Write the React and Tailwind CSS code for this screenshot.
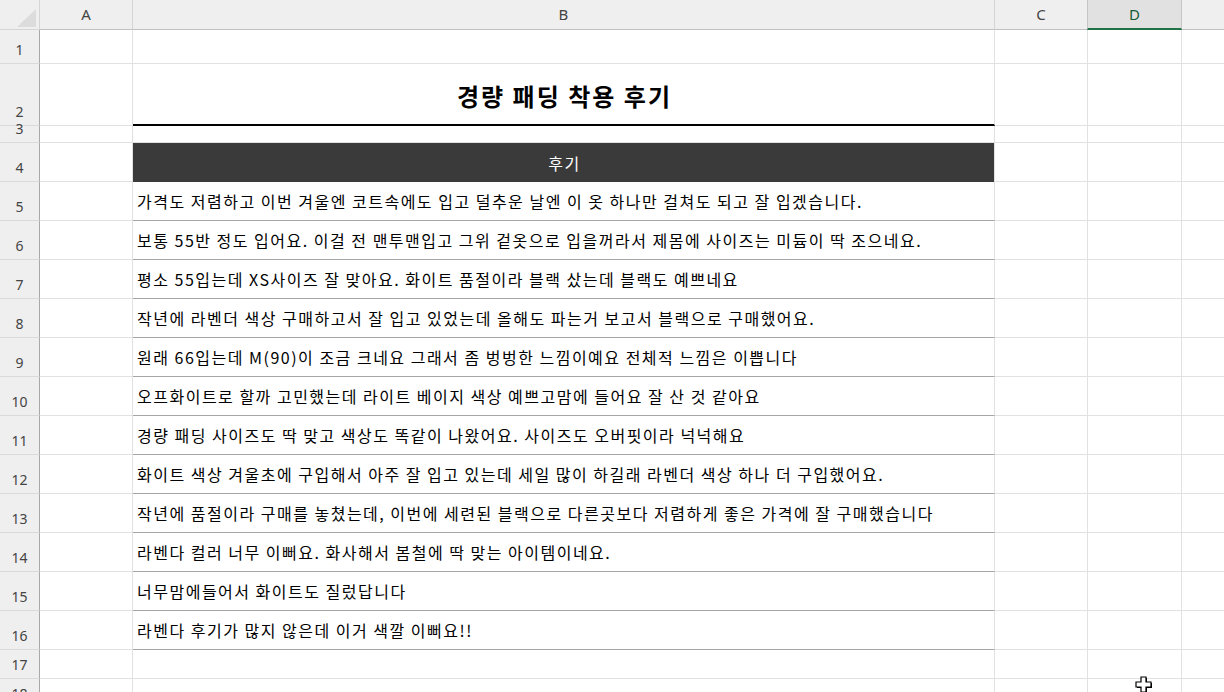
import React from 'react';

const reviews = [
  '가격도 저렴하고 이번 겨울엔 코트속에도 입고 덜추운 날엔 이 옷 하나만 걸쳐도 되고 잘 입겠습니다.',
  '보통 55반 정도 입어요. 이걸 전 맨투맨입고 그위 겉옷으로 입을꺼라서 제몸에 사이즈는 미듐이 딱 조으네요.',
  '평소 55입는데 XS사이즈 잘 맞아요. 화이트 품절이라 블랙 샀는데 블랙도 예쁘네요',
  '작년에 라벤더 색상 구매하고서 잘 입고 있었는데 올해도 파는거 보고서 블랙으로 구매했어요.',
  '원래 66입는데 M(90)이 조금 크네요 그래서 좀 벙벙한 느낌이예요 전체적 느낌은 이쁩니다',
  '오프화이트로 할까 고민했는데 라이트 베이지 색상 예쁘고맘에 들어요 잘 산 것 같아요',
  '경량 패딩 사이즈도 딱 맞고 색상도 똑같이 나왔어요. 사이즈도 오버핏이라 넉넉해요',
  '화이트 색상 겨울초에 구입해서 아주 잘 입고 있는데 세일 많이 하길래 라벤더 색상 하나 더 구입했어요.',
  '작년에 품절이라 구매를 놓쳤는데, 이번에 세련된 블랙으로 다른곳보다 저렴하게 좋은 가격에 잘 구매했습니다',
  '라벤다 컬러 너무 이뻐요. 화사해서 봄철에 딱 맞는 아이템이네요.',
  '너무맘에들어서 화이트도 질렀답니다',
  '라벤다 후기가 많지 않은데 이거 색깔 이뻐요!!',
];

const kr = { fontFamily: '"Noto Sans CJK KR", "Noto Sans", sans-serif' };
const ui = { fontFamily: '"Noto Sans", "Liberation Sans", sans-serif' };

// one spreadsheet row: row number + A..E cells
const Row = ({ n, h, b, bClass }) => (
  <div className={`flex shrink-0 ${h}`}>
    <div
      style={ui}
      className="flex w-[40px] shrink-0 items-end justify-center border-r border-b border-r-[#a8a8a8] border-b-[#dadada] bg-[#efefef] pb-[3px] text-[14px] leading-[20px] text-[#444]"
    >
      {n}
    </div>
    <div className="w-[93px] shrink-0 border-r border-b border-[#e1e1e1]" />
    <div className={`w-[862px] shrink-0 border-r border-r-[#e1e1e1] ${bClass}`}>{b}</div>
    <div className="w-[93px] shrink-0 border-r border-b border-[#e1e1e1]" />
    <div className="w-[94px] shrink-0 border-r border-b border-[#e1e1e1]" />
    <div className="flex-1 border-b border-[#e1e1e1]" />
  </div>
);

const ColHead = ({ label, w, active }) => (
  <div
    style={ui}
    className={
      active
        ? `${w} flex shrink-0 items-center justify-center border-r border-l border-[#c6c6c6] border-b-2 border-b-[#217346] bg-[#e1e1e1] -ml-px text-[15px] text-[#185c37]`
        : `${w} flex shrink-0 items-center justify-center border-r border-b border-r-[#d5d5d5] border-b-[#c0c0c0] bg-[#efefef] text-[15px] text-[#444]`
    }
  >
    {label}
  </div>
);

export default function App() {
  return (
    <div className="relative flex h-[692px] w-[1224px] flex-col overflow-hidden bg-white text-black">
      {/* column headers */}
      <div className="flex h-[30px] shrink-0">
        <div className="relative w-[40px] shrink-0 border-r border-b border-[#d5d5d5] bg-[#efefef]">
          <svg className="absolute left-0 top-0" width="40" height="30" viewBox="0 0 40 30">
            <polygon points="17,27 36,27 36,9" fill="#dcdcdc" />
          </svg>
        </div>
        <ColHead label="A" w="w-[93px]" />
        <ColHead label="B" w="w-[862px]" />
        <ColHead label="C" w="w-[93px]" />
        <ColHead label="D" w="w-[95px]" active />
        <div className="flex-1 border-b border-[#c0c0c0] bg-[#efefef]" />
      </div>

      <Row n="1" h="h-[34px]" bClass="border-b border-b-[#e1e1e1]" />
      <Row
        n="2"
        h="h-[62px]"
        bClass="flex items-end justify-center border-b-2 border-b-black pb-[13px]"
        b={
          <span style={kr} className="pl-[2px] text-[24px] font-bold leading-[30px] tracking-[2px]">
            경량 패딩 착용 후기
          </span>
        }
      />
      <Row n="3" h="h-[17px]" bClass="border-b border-b-[#e1e1e1]" />
      <Row
        n="4"
        h="h-[39px]"
        bClass="flex items-center justify-center bg-[#3a3a3a]"
        b={
          <span style={kr} className="pl-[2px] pt-px text-[16px] leading-[20px] tracking-[1.5px] text-white">
            후기
          </span>
        }
      />
      {reviews.map((t, i) => (
        <Row
          key={i}
          n={String(i + 5)}
          h="h-[39px]"
          bClass="flex items-center border-b border-b-[#a6a6a6] pl-[4px]"
          b={
            <span style={kr} className="whitespace-nowrap text-[16px] leading-[20px] tracking-[1.5px]">
              {t}
            </span>
          }
        />
      ))}
      <Row n="17" h="h-[29px]" bClass="border-b border-b-[#e1e1e1]" />
      <Row n="18" h="h-[29px]" bClass="border-b border-b-[#e1e1e1]" />

      {/* mouse pointer */}
      <svg className="absolute left-[1135px] top-[676px]" width="18" height="18" viewBox="0 0 18 18">
        <path d="M6 1h5v5h5v5h-5v5H6v-5H1V6h5z" fill="#000" transform="translate(1 1)" />
        <path d="M6 1h5v5h5v5h-5v5H6v-5H1V6h5z" fill="#fff" stroke="#000" strokeWidth="1.2" />
      </svg>
    </div>
  );
}
